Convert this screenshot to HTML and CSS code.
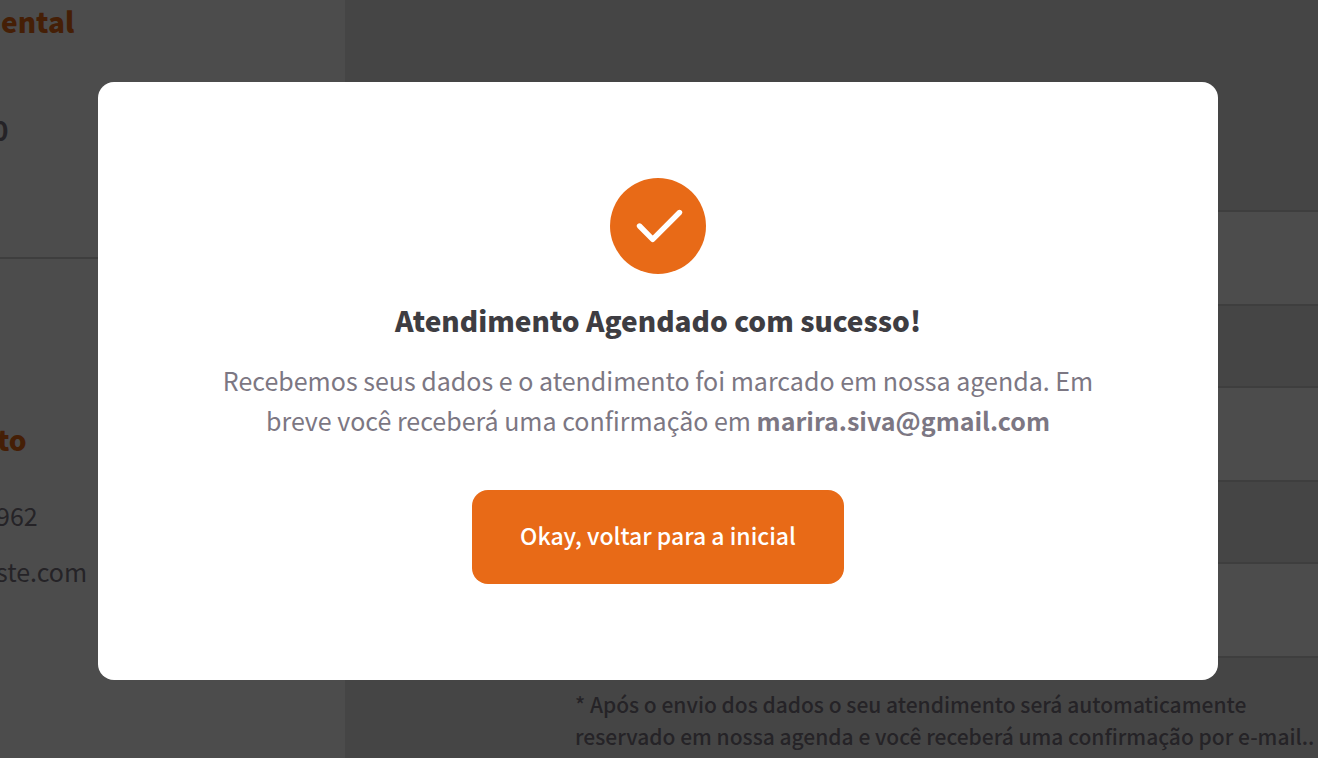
FILE: index.html
```html
<!DOCTYPE html>
<html lang="pt-BR">
<head>
  <meta charset="UTF-8">
  <meta name="viewport" content="width=device-width, initial-scale=1.0">
  <title>Atendimento Agendado</title>
  <link rel="stylesheet" href="styles.css">
</head>
<body>
  <div class="page" inert>
    <aside class="sidebar">
      <div class="summary">
        <h2 class="sidebar-title">ental</h2>
        <p class="price">0</p>
      </div>
      <div class="contact">
        <h2 class="sidebar-title">to</h2>
        <p class="contact-line">962</p>
        <p class="contact-line">ste.com</p>
      </div>
    </aside>

    <main class="content">
      <form class="form">
        <input type="text" aria-label="Nome">
        <input type="email" aria-label="E-mail">
        <input type="tel" aria-label="Telefone">
      </form>
      <p class="note">* Após o envio dos dados o seu atendimento será automaticamente reservado em nossa agenda e você receberá uma confirmação por e-mail..</p>
    </main>
  </div>

  <div class="overlay">
    <div class="modal" role="dialog" aria-modal="true" aria-labelledby="modal-title">
      <svg class="modal-icon" viewBox="0 0 96 96" aria-hidden="true">
        <circle cx="48" cy="48" r="48" fill="#e86a17"/>
        <path d="M29.500 48 42.700 61.300 69.500 34.500" fill="none" stroke="#fff" stroke-width="5.400" stroke-linecap="round" stroke-linejoin="round"/>
      </svg>
      <h1 class="modal-title" id="modal-title">Atendimento Agendado com sucesso!</h1>
      <p class="modal-text">Recebemos seus dados e o atendimento foi marcado em nossa agenda. Em breve você receberá uma confirmação em <strong>marira.siva@gmail.com</strong></p>
      <button type="button" class="modal-button">Okay, voltar para a inicial</button>
    </div>
  </div>
</body>
</html>
```
FILE: styles.css
```css
* {
  box-sizing: border-box;
  margin: 0;
}
body {
  font-family: "Noto Sans CJK JP", "Noto Sans", sans-serif;
  font-size: 25px;
  color: #7c7783;
  background: #e8e8e8;
  overflow: hidden;
}
.page {
  display: flex;
  min-height: 100vh;
}
.sidebar {
  flex: 0 0 345px;
  background: #fff;
}
.summary {
  height: 259px;
  padding-top: 1px;
  border-bottom: 2px solid #d0d0d0;
}
.sidebar-title {
  padding-left: 1px;
  font-size: 28px;
  font-weight: 900;
  line-height: 40px;
  color: #e86a17;
}
.price {
  margin: 68px 0 0 -8px;
  font-size: 28px;
  font-weight: 700;
  line-height: 40px;
}
.contact {
  margin-left: -4px;
  padding-top: 160px;
}
.contact .sidebar-title {
  margin-bottom: 36px;
}
.contact-line {
  margin-bottom: 16px;
  line-height: 40px;
}
.content {
  flex: 1;
  min-width: 0;
  padding: 210px 0 0 230px;
}
.form {
  display: flex;
  flex-direction: column;
  gap: 80px;
  margin-right: -16px;
}
.form input {
  height: 96px;
  padding: 0 24px;
  font: inherit;
  background: #fff;
  border: 2px solid #d0d0d0;
  border-radius: 16px;
}
.note {
  margin-top: 30px;
  font-size: 21px;
  font-weight: 500;
  line-height: 32px;
}
.overlay {
  position: fixed;
  inset: 0;
  display: flex;
  align-items: center;
  justify-content: center;
  padding: 4px 2px 0 0;
  background: rgba(0, 0, 0, 0.7);
}
.modal {
  display: flex;
  flex-direction: column;
  align-items: center;
  width: 90%;
  max-width: 1120px;
  padding: 96px;
  text-align: center;
  background: #fff;
  border-radius: 16px;
}
.modal-icon {
  width: 96px;
  height: 96px;
}
.modal-title {
  margin: 26px 0 20px;
  font-size: 28px;
  font-weight: 900;
  line-height: 40px;
  color: #3e3d42;
}
.modal-text {
  line-height: 40px;
}
.modal-button {
  margin-top: 50px;
  padding: 25px 48px 29px;
  font-family: inherit;
  font-size: 23px;
  font-weight: 500;
  line-height: 40px;
  color: #fff;
  background: #e86a17;
  border: none;
  border-radius: 16px;
  cursor: pointer;
}
.modal-button:hover {
  background: #d05e12;
}
```
